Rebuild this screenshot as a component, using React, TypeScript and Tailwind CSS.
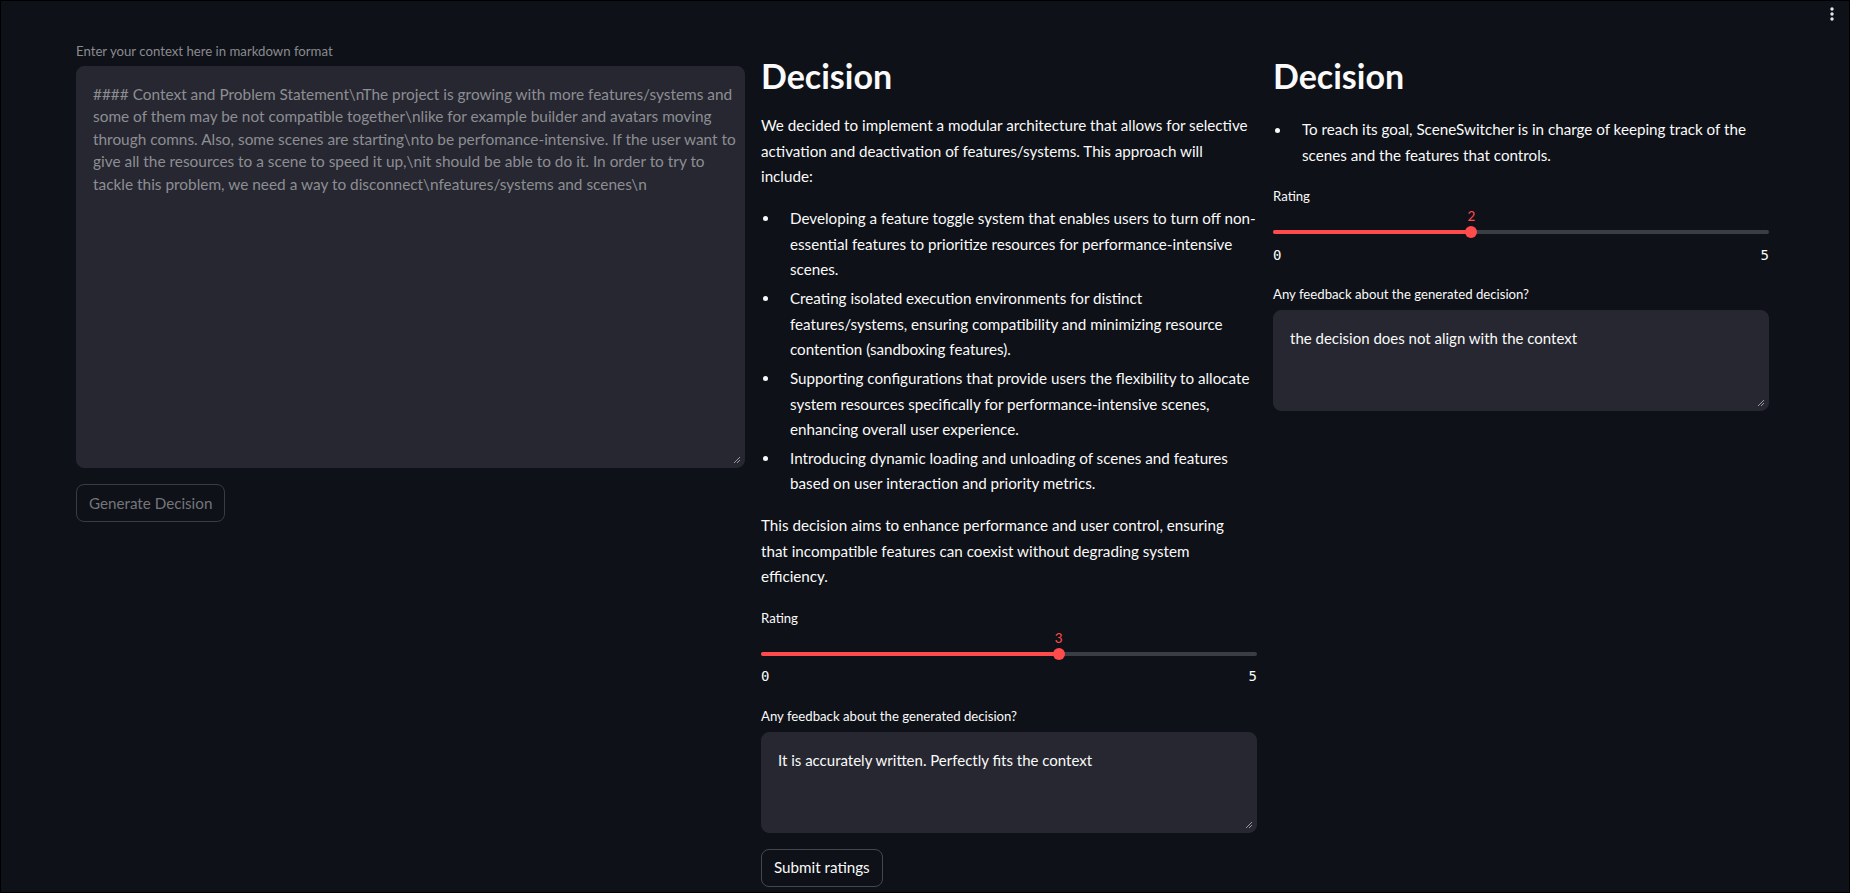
import React from "react";

const contextLines = [
  "#### Context and Problem Statement\\nThe project is growing with more features/systems and",
  "some of them may be not compatible together\\nlike for example builder and avatars moving",
  "through comns. Also, some scenes are starting\\nto be perfomance-intensive. If the user want to",
  "give all the resources to a scene to speed it up,\\nit should be able to do it. In order to try to",
  "tackle this problem, we need a way to disconnect\\nfeatures/systems and scenes\\n",
];

function Lines({ lines }: { lines: string[] }) {
  return (
    <>
      {lines.map((l, i) => (
        <React.Fragment key={i}>
          {l}
          {i < lines.length - 1 && <br />}
        </React.Fragment>
      ))}
    </>
  );
}

function Grip() {
  return (
    <svg className="absolute right-[3px] bottom-[3px]" width="8" height="8" viewBox="0 0 8 8">
      <path d="M7 1 L1 7 M7 4 L4 7" stroke="#9a9ba0" strokeWidth="1" />
    </svg>
  );
}

function Bullet({ lines }: { lines: string[] }) {
  return (
    <li className="flex [&+li]:mt-[3.2px]">
      <span className="w-[29px] shrink-0">
        <span className="mt-[10.5px] ml-[2px] block h-[5px] w-[5px] rounded-full bg-[#fafafa]" />
      </span>
      <span className="whitespace-nowrap">
        <Lines lines={lines} />
      </span>
    </li>
  );
}

function Slider({ value, max }: { value: number; max: number }) {
  const pct = (value / max) * 100;
  return (
    <div>
      <div className="relative h-[16px]">
        <span
          className="absolute top-0 -translate-x-1/2 text-[13.5px] leading-[16px] text-[#ff4b4b]"
          style={{ left: `${pct}%` }}
        >
          {value}
        </span>
      </div>
      <div className="relative flex h-[16px] items-center">
        <div className="h-[4px] w-full rounded-full bg-[#3b3d45]" />
        <div className="absolute left-0 h-[4px] rounded-full bg-[#ff4b4b]" style={{ width: `${pct}%` }} />
        <div
          className="absolute h-[12px] w-[12px] -translate-x-1/2 rounded-full bg-[#ff4b4b]"
          style={{ left: `${pct}%` }}
        />
      </div>
      <div className="mt-1 flex h-[22px] items-center justify-between font-['DejaVu_Sans_Mono',monospace] text-[14px] text-[#fafafa]">
        <span>0</span>
        <span>{max}</span>
      </div>
    </div>
  );
}

function RatingBlock({ value, feedback, submit }: { value: number; feedback: string; submit?: boolean }) {
  return (
    <div className="mt-4">
      <div className="h-[24px] text-[13.2px] leading-[24px] text-[#fafafa]">Rating</div>
      <Slider value={value} max={5} />
      <div className="mt-4 mb-1 h-[24px] text-[13.2px] leading-[24px] text-[#fafafa]">
        Any feedback about the generated decision?
      </div>
      <div className="relative h-[101px] rounded-lg border border-[#262730] bg-[#262730] px-4 py-4 text-[15px] leading-[22.4px] text-[#fafafa]">
        {feedback}
        <Grip />
      </div>
      {submit && (
        <button className="mt-4 h-[38px] rounded-lg border border-[#45474e] px-3 text-[15.2px] text-[#fafafa]">
          Submit ratings
        </button>
      )}
    </div>
  );
}

export default function App() {
  return (
    <div className="relative min-h-screen border border-black bg-[#0e1117] font-['Lato',sans-serif] text-[15.2px] text-[#fafafa]">
      <svg className="absolute right-[14px] top-[5px]" width="6" height="16" viewBox="0 0 6 16">
        <circle cx="3" cy="3" r="1.7" fill="#e6e6e6" />
        <circle cx="3" cy="8" r="1.7" fill="#e6e6e6" />
        <circle cx="3" cy="13" r="1.7" fill="#e6e6e6" />
      </svg>

      <div className="flex items-start gap-4 pl-[75px]">
        {/* context input */}
        <div className="w-[669px] shrink-0 pt-[38px]">
          <div className="mb-[3px] h-[24px] text-[13.2px] leading-[24px] text-[#8a8b90]">
            Enter your context here in markdown format
          </div>
          <div className="relative h-[402px] rounded-lg border border-[#262730] bg-[#262730] p-4 text-[15.4px] leading-[22.4px] whitespace-nowrap text-[#8d8e93]">
            <Lines lines={contextLines} />
            <Grip />
          </div>
          <button className="mt-4 h-[38px] rounded-lg border border-[#3a3c43] px-3 text-[15.2px] text-[#74767b]">
            Generate Decision
          </button>
        </div>

        {/* decision 1 */}
        <div className="w-[496px] shrink-0 leading-[25.6px]">
          <h2 className="mt-[53px] text-[34px] font-bold leading-[43.2px]">Decision</h2>
          <p className="mt-[16px] whitespace-nowrap">
            <Lines
              lines={[
                "We decided to implement a modular architecture that allows for selective",
                "activation and deactivation of features/systems. This approach will",
                "include:",
              ]}
            />
          </p>
          <ul className="mt-4">
            <Bullet
              lines={[
                "Developing a feature toggle system that enables users to turn off non-",
                "essential features to prioritize resources for performance-intensive",
                "scenes.",
              ]}
            />
            <Bullet
              lines={[
                "Creating isolated execution environments for distinct",
                "features/systems, ensuring compatibility and minimizing resource",
                "contention (sandboxing features).",
              ]}
            />
            <Bullet
              lines={[
                "Supporting configurations that provide users the flexibility to allocate",
                "system resources specifically for performance-intensive scenes,",
                "enhancing overall user experience.",
              ]}
            />
            <Bullet
              lines={[
                "Introducing dynamic loading and unloading of scenes and features",
                "based on user interaction and priority metrics.",
              ]}
            />
          </ul>
          <p className="mt-4 whitespace-nowrap">
            <Lines
              lines={[
                "This decision aims to enhance performance and user control, ensuring",
                "that incompatible features can coexist without degrading system",
                "efficiency.",
              ]}
            />
          </p>
          <RatingBlock value={3} feedback="It is accurately written. Perfectly fits the context" submit />
        </div>

        {/* decision 2 */}
        <div className="w-[496px] shrink-0 leading-[25.6px]">
          <h2 className="mt-[53px] text-[34px] font-bold leading-[43.2px]">Decision</h2>
          <ul className="mt-[20px]">
            <Bullet
              lines={[
                "To reach its goal, SceneSwitcher is in charge of keeping track of the",
                "scenes and the features that controls.",
              ]}
            />
          </ul>
          <RatingBlock value={2} feedback="the decision does not align with the context" />
        </div>
      </div>
    </div>
  );
}
